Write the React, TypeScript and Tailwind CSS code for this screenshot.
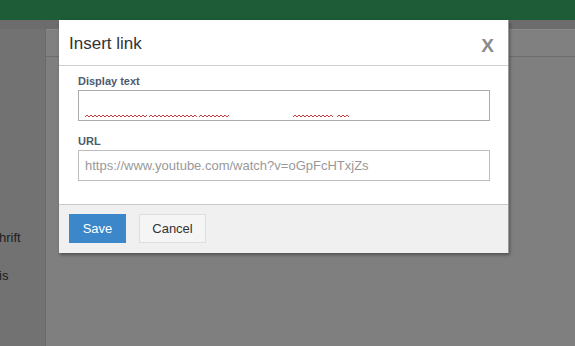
import React from 'react';

const Squiggle: React.FC<{ width: number }> = ({ width }) => {
  const pts: string[] = [];
  for (let x = 0; x <= width; x += 2) {
    pts.push(`${x},${(x / 2) % 2 === 0 ? 3 : 1}`);
  }
  return (
    <svg width={width} height={4} className="block">
      <polyline points={pts.join(' ')} fill="none" stroke="#c0272d" strokeWidth={0.9} />
    </svg>
  );
};

export default function App() {
  return (
    <div
      className="relative w-[575px] h-[346px] overflow-hidden flex flex-col bg-[#7f7f7f]"
      style={{ fontFamily: '"Liberation Sans", Arial, sans-serif' }}
    >
      {/* app header (dimmed) */}
      <div className="h-[20px] bg-[#1e5b37] shrink-0" />

      <div className="flex flex-1">
        {/* sidebar */}
        <div className="w-[46px] bg-[#727272] border-r border-[#6a6a6a] flex flex-col">
          <div className="h-[9px] bg-[#6c6c6c]" />
          <div className="pt-[202px] text-[13px] text-[#1c1c1c] leading-none flex flex-col gap-[25px] -ml-[1px]">
            <span>hrift</span>
            <span>is</span>
          </div>
        </div>

        {/* main area */}
        <div className="flex-1 flex flex-col">
          <div className="h-[9px] bg-[#6c6c6c]" />
          <div className="h-[28px] bg-[#808080] border-t border-[#8a8a8a] border-b border-b-[#6d6d6d]" />
          <div className="flex-1 bg-[#7f7f7f]" />
        </div>
      </div>

      {/* dialog */}
      <div className="absolute left-[59px] top-[20px] w-[450px] bg-white border-r border-[#9a9a9a] shadow-[1px_2px_3px_rgba(0,0,0,0.35)]">
        <div className="h-[46px] border-b border-[#cfcfcf] flex items-center justify-between pl-[10px] pr-[14px] pt-[2px]">
          <span className="text-[17px] text-[#333]">Insert link</span>
          <span className="text-[19px] font-bold text-[#8a8a8a] pt-[5px]">X</span>
        </div>

        <div className="px-[19px] pt-[10px] pb-[23px]">
          <div className="text-[11px] font-bold text-[#4c5a6e] leading-none mb-[3px]">Display text</div>
          <div className="h-[31px] w-[412px] border border-[#ababab] relative">
            <div className="absolute left-[6px] top-[23px] flex">
              <div className="mr-[2px]"><Squiggle width={62} /></div>
              <div className="mr-[2px]"><Squiggle width={48} /></div>
              <div className="mr-[64px]"><Squiggle width={30} /></div>
              <div className="mr-[4px]"><Squiggle width={40} /></div>
              <Squiggle width={12} />
            </div>
          </div>

          <div className="text-[11px] font-bold text-[#4c5a6e] leading-none mt-[15px] mb-[3px]">URL</div>
          <div className="h-[31px] w-[412px] border border-[#bdbdbd] flex items-center px-[6px]">
            <span className="text-[13px] text-[#999]">https://www.youtube.com/watch?v=oGpFcHTxjZs</span>
          </div>
        </div>

        <div className="h-[49px] bg-[#f0f0f0] border-t border-[#c8c8c8] flex items-start pt-[9px] pl-[10px] gap-[13px]">
          <button className="h-[29px] w-[57px] bg-[#3c87c9] text-white text-[13px]">Save</button>
          <button className="h-[29px] w-[67px] bg-[#f5f5f5] border border-[#dedede] text-[#333] text-[13px]">Cancel</button>
        </div>
      </div>
    </div>
  );
}
